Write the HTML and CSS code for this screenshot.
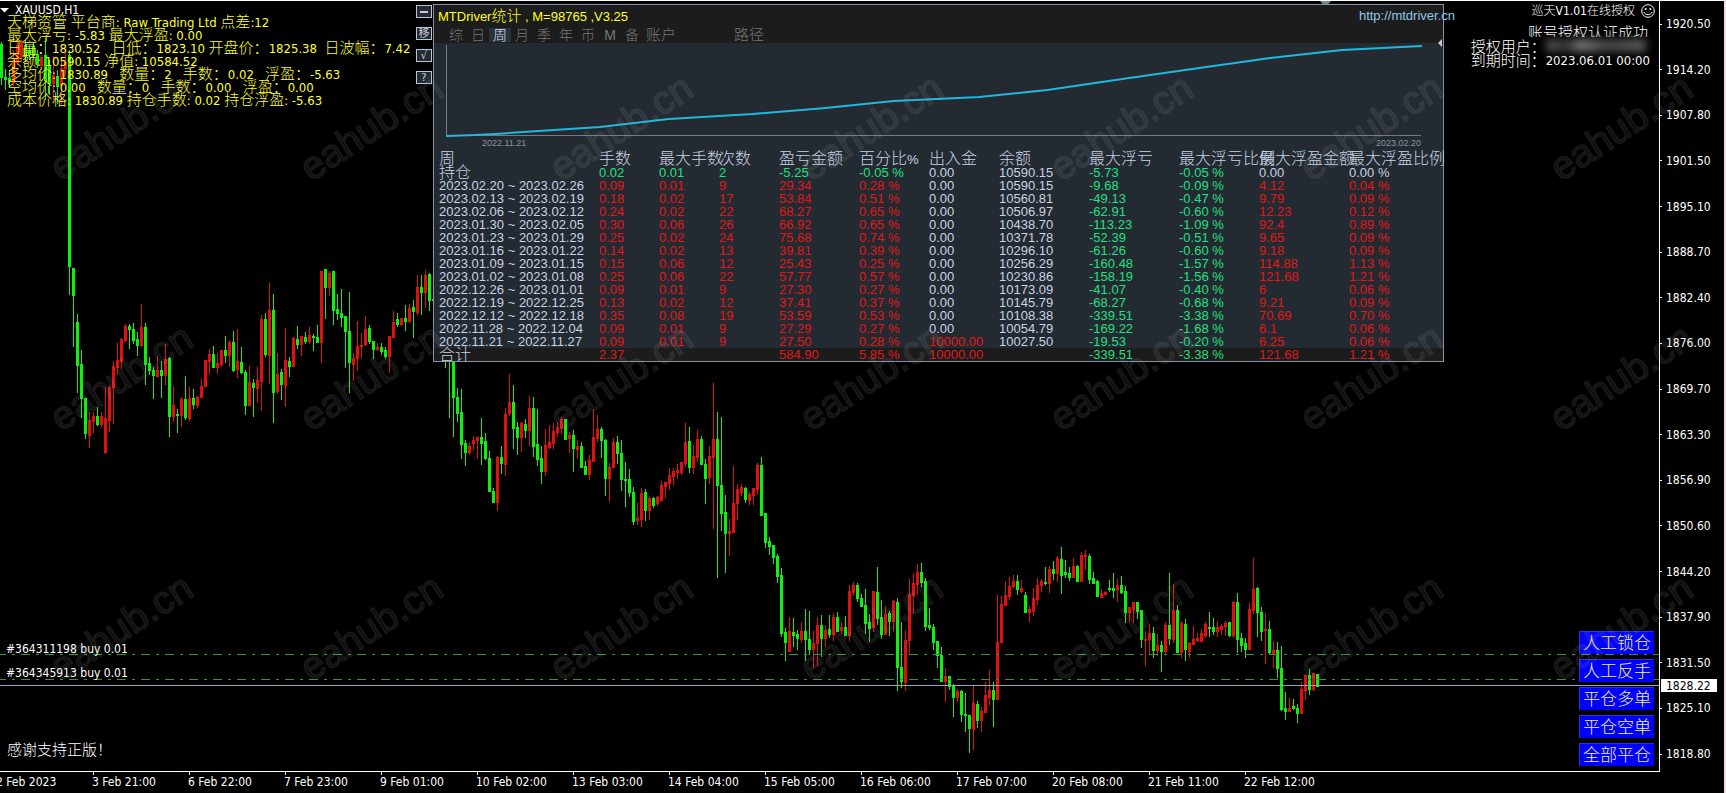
FILE: index.html
```html
<!DOCTYPE html>
<html lang="zh-CN">
<head>
    <meta charset="UTF-8">
    <meta name="viewport" content="width=device-width, initial-scale=1.0">
    <title>XAUUSD,H1</title>
    <link rel="stylesheet" href="styles.css">
</head>
<body>
    <div class="terminal">
        <main class="chart">
            <svg class="chart-canvas" id="chart-canvas" aria-hidden="true">
                <g id="candles" shape-rendering="crispEdges"></g>
                <g shape-rendering="crispEdges">
                    <line class="order-line" x1="-3" y1="654.5" x2="100%" y2="654.5"/>
                    <line class="order-line" x1="-3" y1="679.5" x2="100%" y2="679.5"/>
                    <line class="price-line" x1="0" y1="685.5" x2="100%" y2="685.5"/>
                </g>
                <path d="M0 8h9l-4.500 4.500z" fill="#fff"/>
                <path d="M1320 1h11l-5.500 6z" fill="#778899"/>
            </svg>

            <h1 class="symbol">XAUUSD,H1</h1>

            <section class="info">
                <p>天梯资管<span> </span>平台商<span>: Raw Trading Ltd </span>点差<span>:12</span></p>
                <p>最大浮亏<span>: -5.83 </span>最大浮盈<span>: 0.00</span></p>
                <p>日高：<span>1830.52   </span>日低：<span>1823.10 </span>开盘价：<span>1825.38  </span>日波幅：<span>7.42</span></p>
                <p>余额<span>: 10590.15 </span>净值<span>: 10584.52</span></p>
                <p>多均价<span>: 1830.89   </span>数量：<span>2   </span>手数：<span>0.02   </span>浮盈：<span>-5.63</span></p>
                <p>空均价<span>: 0.00   </span>数量：<span>0   </span>手数：<span>0.00   </span>浮盈：<span>0.00</span></p>
                <p>成本价格<span>: 1830.89 </span>持仓手数<span>: 0.02 </span>持仓浮盈<span>: -5.63</span></p>
            </section>

            <div class="tools">
                <button type="button" aria-label="最小化"><i></i></button>
                <button type="button">移</button>
                <button type="button">√</button>
                <button type="button">?</button>
            </div>

            <section class="panel">
                <header class="panel-head">
                    <div class="panel-title">
                        <h2>MTDriver<span>统计</span> , M=98765 ,V3.25</h2>
                        <a href="http://mtdriver.cn">http://mtdriver.cn</a>
                    </div>
                    <nav class="tabs">
                        <button type="button">综</button>
                        <button type="button">日</button>
                        <button type="button" class="active">周</button>
                        <button type="button">月</button>
                        <button type="button">季</button>
                        <button type="button">年</button>
                        <button type="button">币</button>
                        <button type="button">M</button>
                        <button type="button">备</button>
                        <button type="button" class="wide">账户</button>
                        <button type="button" class="path">路径</button>
                    </nav>
                </header>

                <div class="equity">
                    <svg viewBox="0 0 1010 94" aria-hidden="true">
                        <path d="M12.500 2v90.500H988" fill="none" stroke="#737a82" shape-rendering="crispEdges"/>
                        <polyline points="12,93 42,92 61,91 166,84 235,76 319,71 392,65 460,58 546,54 614,47 689,36 766,25 837,15 909,7 989,3" fill="none" stroke="#1fb8de" stroke-width="2"/>
                        <path d="M1009 -4v8l-4 -4z" fill="#c8ccd0"/>
                    </svg>
                    <div class="equity-dates">
                        <time>2022.11.21</time>
                        <time>2023.02.20</time>
                    </div>
                </div>

                <table class="stats">
                    <colgroup>
                        <col class="c-date"><col class="c-60"><col class="c-60"><col class="c-60">
                        <col class="c-80"><col class="c-70"><col class="c-70"><col class="c-90">
                        <col class="c-90"><col class="c-80"><col class="c-90"><col>
                    </colgroup>
                    <thead>
                        <tr>
                            <th>周</th>
                            <th>手数</th>
                            <th>最大手数</th>
                            <th>次数</th>
                            <th>盈亏金额</th>
                            <th>百分比<small>%</small></th>
                            <th>出入金</th>
                            <th>余额</th>
                            <th>最大浮亏</th>
                            <th>最大浮亏比例</th>
                            <th>最大浮盈金额</th>
                            <th>最大浮盈比例</th>
                        </tr>
                    </thead>
                    <tbody id="stats-body"></tbody>
                    <tfoot id="stats-foot"></tfoot>
                </table>
            </section>

            <section class="license">
                <p class="expert">巡天V1.01在线授权
                    <svg width="14" height="14" viewBox="0 0 14 14" aria-hidden="true">
                        <circle cx="7" cy="7" r="6.300" fill="none" stroke="#fff"/>
                        <circle cx="4.700" cy="5" r="1" fill="#fff"/>
                        <circle cx="9.300" cy="5" r="1" fill="#fff"/>
                        <path d="M3 8c1 3.600 7 3.600 8 0" fill="none" stroke="#fff"/>
                    </svg>
                </p>
                <p class="auth">账号授权认证成功</p>
                <p class="row">授权用户：<i class="masked"></i></p>
                <p class="row">到期时间：<span>2023.06.01 00:00</span></p>
            </section>

            <p class="order order-1">#364311198 buy 0.01</p>
            <p class="order order-2">#364345913 buy 0.01</p>
            <p class="thanks">感谢支持正版！</p>

            <div class="actions">
                <button type="button">人工锁仓</button>
                <button type="button">人工反手</button>
                <button type="button">平仓多单</button>
                <button type="button">平仓空单</button>
                <button type="button">全部平仓</button>
            </div>
        </main>

        <aside class="prices">
            <ul id="price-list"></ul>
            <span class="bid">1828.22</span>
        </aside>

        <footer class="times" id="times"></footer>
    </div>

    <svg class="watermark" aria-hidden="true">
        <defs>
            <pattern id="mark" width="250" height="250" patternUnits="userSpaceOnUse">
                <text x="0" y="0" transform="translate(61 182) rotate(-33)">eahub.cn</text>
            </pattern>
        </defs>
        <rect width="100%" height="100%" fill="url(#mark)"/>
    </svg>

    <script src="script.js"></script>
</body>
</html>
```

FILE: styles.css
```css
* {
    box-sizing: border-box;
}
body {
    margin: 0;
    background-color: #000;
    color: #fff;
    font-family: "DejaVu Sans Condensed", "Noto Sans", "Noto Sans CJK SC", sans-serif;
    font-size: 12px;
    line-height: 14px;
    overflow: hidden;
}
h1, h2, p, ul {
    margin: 0;
    padding: 0;
    font-size: inherit;
    font-weight: normal;
}
button {
    margin: 0;
    padding: 0;
    border: 0;
    background: none;
    color: inherit;
    font: inherit;
    cursor: pointer;
}

.terminal {
    display: grid;
    grid-template-columns: 1fr 64px;
    grid-template-rows: 1fr 21px;
    min-height: 100vh;
    border-top: 1px solid #fff;
    border-right: 2px solid #f3dcdc;
}
.chart {
    position: relative;
    min-width: 0;
    border-top: 1px solid #fff;
    border-right: 1px solid #fff;
    border-bottom: 1px solid #fff;
    overflow: hidden;
    margin-top: -1px;
}
.chart-canvas {
    position: absolute;
    top: -1px;
    left: 0;
    width: 100%;
    height: 100%;
}
.up {
    fill: #e01010;
}
.down {
    fill: #10f010;
}
.order-line {
    stroke: #2c9a35;
    stroke-dasharray: 9 6 3 6;
}
.price-line {
    stroke: #9aa6bc;
}
.symbol {
    position: absolute;
    top: 2px;
    left: 15px;
}

/* account summary */
.info {
    position: absolute;
    top: 13px;
    left: 7px;
    color: #ffff20;
    font-family: "Noto Sans CJK SC", sans-serif;
    font-size: 15px;
    font-weight: 300;
}
.info p {
    height: 13px;
    font-weight: 300;
    line-height: 13px;
    white-space: pre;
}
.info span {
    font-family: "DejaVu Sans Condensed", "Noto Sans", sans-serif;
    font-size: 13px;
    font-weight: 400;
}

.tools {
    position: absolute;
    top: 4px;
    left: 416px;
    display: flex;
    flex-direction: column;
    gap: 9px;
}
.tools button {
    display: flex;
    align-items: center;
    justify-content: center;
    width: 16px;
    height: 13px;
    border: 1px solid #b4c6dc;
    background-color: #262b33;
    color: #d0d4d8;
    font-size: 11px;
    line-height: 11px;
    overflow: hidden;
}
.tools i {
    width: 8px;
    height: 2px;
    background-color: #c8ccd0;
}

/* statistics window */
.panel {
    position: absolute;
    top: 3px;
    left: 433px;
    width: 1011px;
    border: 1px solid #8492a6;
    background-color: #242a32;
    color: #c8d4e4;
    font-family: "Liberation Sans", "Noto Sans CJK SC", sans-serif;
    font-size: 13px;
}
.panel-head {
    height: 38px;
    background-color: #1c1c1c;
}
.panel-title {
    display: flex;
    justify-content: space-between;
    padding-top: 3px;
    line-height: 16px;
    margin-right: -12px;
}
.panel-title h2 {
    padding-left: 4px;
    color: #ffff20;
    white-space: pre;
}
.panel-title span {
    font-size: 15px;
    font-weight: 300;
}
.panel-title a {
    color: #8fc8e8;
    text-decoration: none;
}
.tabs {
    display: flex;
    padding: 3px 0 0 11px;
    color: #777;
    font-size: 14px;
    font-weight: 300;
    line-height: 14px;
}
.tabs button {
    width: 22px;
    height: 14px;
}
.tabs .active {
    background-color: #2a323e;
    color: #d4e4f8;
}
.tabs .wide,
.tabs .path {
    width: 36px;
    font-size: 15px;
}
.tabs .path {
    margin-left: 52px;
}
.equity svg {
    display: block;
    width: 100%;
    overflow: visible;
}
.equity-dates {
    display: flex;
    justify-content: space-between;
    height: 15px;
    padding: 0 22px 0 48px;
    color: #8a94a0;
    font-size: 9px;
    line-height: 12px;
}
.stats {
    width: 100%;
    table-layout: fixed;
    border-collapse: collapse;
}
.c-date { width: 165px; }
.c-60 { width: 60px; }
.c-70 { width: 70px; }
.c-80 { width: 80px; }
.c-90 { width: 90px; }
.stats th, .stats td {
    height: 13px;
    padding: 0;
    font-weight: normal;
    line-height: 13px;
    text-align: left;
    white-space: nowrap;
}
.stats th:first-child, .stats td:first-child {
    padding-left: 5px;
}
.stats th {
    height: 14px;
    font-size: 16px;
    font-weight: 300;
}
.stats th small {
    font-size: 13px;
}
.stats .zh {
    font-size: 16px;
    font-weight: 300;
}
.stats .gain {
    color: #e01818;
}
.stats .loss {
    color: #20e080;
}
.stats tfoot {
    background-color: #1c1c1c;
}

/* licence notice */
.license {
    position: absolute;
    top: 3px;
    right: 4px;
    display: flex;
    flex-direction: column;
    font-family: "DejaVu Sans Condensed", "Noto Sans CJK SC", sans-serif;
}
.license p {
    font-weight: 300;
}
.expert {
    display: flex;
    gap: 6px;
    align-self: flex-end;
}
.auth {
    align-self: flex-end;
    height: 13px;
    margin: 6px 7px 0 0;
    font-size: 15px;
    line-height: 18px;
    overflow: hidden;
}
.row {
    display: flex;
    height: 14px;
    font-size: 15px;
    line-height: 20px;
}
.row span {
    font-size: 13px;
    font-weight: 400;
    margin-right: 5px;
}
.masked {
    width: 100px;
    height: 13px;
    margin-top: 2px;
    background: linear-gradient(to right, #555, #333 20%, #777 35%, #444 60%, #5a5a5a);
    filter: blur(4px);
}

.order {
    position: absolute;
    left: 6px;
}
.order-1 { top: 641px; }
.order-2 { top: 665px; }
.thanks {
    position: absolute;
    left: 7px;
    bottom: 12px;
    font-size: 15px;
    font-weight: 300;
    line-height: 18px;
}
.actions {
    position: absolute;
    right: 5px;
    bottom: 5px;
    display: flex;
    flex-direction: column;
    gap: 5px;
}
.actions button {
    width: 75px;
    height: 23px;
    border-top: 1px solid #3030d8;
    border-left: 1px solid #3030d8;
    background-color: #00f;
    color: #f4f4a0;
    font-size: 17px;
    font-weight: 300;
    line-height: 20px;
}

/* scales */
.prices {
    position: relative;
}
.prices ul {
    display: flex;
    flex-direction: column;
    justify-content: space-between;
    height: 100%;
    padding: 15px 0 10px;
    list-style: none;
}
.prices li {
    display: flex;
    align-items: center;
    gap: 4px;
    height: 16px;
}
.prices li::before {
    content: "";
    width: 2px;
    height: 1px;
    background-color: #fff;
}
.bid {
    position: absolute;
    top: 678px;
    left: 1px;
    width: 56px;
    height: 13px;
    padding-left: 5px;
    background-color: #fff;
    color: #000;
    line-height: 14px;
}
.times {
    grid-column: 1 / -1;
    display: flex;
    margin-left: -4px;
    overflow: hidden;
}
.times span {
    flex: 0 0 96px;
    line-height: 15px;
    white-space: nowrap;
}
.times span::before {
    content: "";
    display: block;
    width: 1px;
    height: 3px;
    margin-left: 1px;
    background-color: #fff;
}

.watermark {
    position: absolute;
    top: 0;
    left: 0;
    width: 100%;
    height: 100%;
    pointer-events: none;
}
.watermark text {
    font-family: "Liberation Sans", sans-serif;
    font-size: 39px;
    fill: rgba(150, 150, 150, 0.08);
    stroke: rgba(150, 150, 150, 0.11);
    stroke-width: 2px;
}
```

FILE: script.js
```js
// Candles every 4px: direction, high, body top, body bottom, low
const runs = [
    {
        x: 1,
        bars: `g42,44,77,85 g69,77,79,90 g70,78,80,88 r50,60,82,86 r40,45,62,65 r40,41,56,62 g40,45,56,62 g45,50,54,60
        g43,46,55,60 g50,54,64,68 r55,57,65,70 g38,55,80,100 g60,66,83,95 r56,75,83,100 g70,76,86,104 r62,68,85,104
        r50,62,68,75 g50,55,266,295 g268,268,295,347 g314,322,365,393 g350,364,398,418 g398,398,433,439 r412,420,435,448
        r412,416,421,433 g407,416,424,426 r412,416,424,427 r387,418,452,454 r385,387,420,432 r361,366,387,424 r343,360,367,375
        r338,339,361,369 r324,326,340,342 g324,326,329,349 g323,329,340,344 g332,339,345,356 r304,327,345,347 g323,327,364,385
        g357,363,370,375 g367,370,375,399 r356,370,376,376 g361,370,375,398 r344,359,375,385 g357,358,416,437 r386,405,416,422
        g409,414,415,433 r397,399,415,427 g376,399,417,420 r387,398,418,421 g389,398,404,409 r396,397,405,408 r379,386,397,398
        r360,360,386,387 r349,354,361,374 g346,354,367,368 r353,363,367,374 r350,350,364,367 g336,350,355,363 r340,342,355,367
        g331,342,370,372 r329,361,369,378 g347,362,372,374 g370,372,405,415 r366,382,405,405 g379,383,387,417 r367,380,388,403
        r315,319,381,411 g313,319,354,357 r283,310,355,384 g294,310,392,423 r353,374,391,394 g369,372,384,400 r328,360,385,407
        g357,361,366,377 r337,338,366,367 g326,339,344,349 r336,336,344,356 g332,337,341,344 r327,335,341,344 g334,336,337,351
        g325,337,342,343 r271,271,342,363 g269,269,287,319 r271,273,287,296 g271,271,310,325 g294,309,313,320 g289,313,317,327
        g316,316,331,368 g292,331,362,393 r353,358,364,381 r321,346,358,371 r333,345,346,358 r316,329,344,346 g325,328,341,344
        g341,341,349,359 r343,347,349,351 g343,347,351,355 g347,350,356,359 r336,336,356,373 r311,322,337,338 g313,319,324,327
        r318,318,324,326 g305,318,321,331 r304,308,321,323 g300,307,311,338 r275,287,312,315 g275,287,292,315 r270,275,292,308
        g273,274,300,311 g298,299,300,301`
    },
    {
        x: 445,
        bars: `g340,350,358,368 g330,340,350,418 g350,350,397,437 g388,397,413,422 g389,412,444,459 g440,443,452,466 r442,446,452,455
        r436,440,443,450 r437,437,440,459 g418,437,443,465 g433,441,458,460 g451,458,491,492 g488,491,502,503 r456,457,502,511
        g446,457,463,474 r408,414,464,476 r374,402,413,416 g385,402,428,449 g422,427,437,455 r422,423,437,452 g419,424,430,438
        r396,408,430,446 g397,408,446,457 g409,444,459,466 g446,458,471,484 r429,445,471,476 r425,442,447,449 r423,431,443,449
        r422,427,432,437 r417,419,428,434 g419,419,439,440 r432,435,438,453 g430,435,448,472 r440,446,449,459 g442,446,467,467
        g461,466,474,475 r455,460,474,480 r409,437,461,462 r415,429,438,442 g427,429,440,458 g439,440,478,496 r463,467,478,502
        r438,442,467,468 g436,442,453,464 g440,453,479,491 g462,479,480,507 g469,479,492,497 g487,492,521,525 r503,518,520,525
        r488,493,519,527 g489,492,510,521 r496,498,510,520 g497,498,505,508 r496,497,503,506 r481,485,500,501 r482,482,486,498
        r468,475,483,490 r468,471,476,485 r464,470,472,479 r462,462,472,475 r423,442,463,467 g427,441,467,473 r445,456,467,474
        r430,439,457,462 g436,439,464,465 g459,464,478,504 r446,456,477,484 r383,439,457,529 g412,439,485,578 g417,485,513,531
        g495,512,533,573 r519,531,533,556 r466,503,532,533 r484,489,503,520 r484,487,492,496 g487,488,499,503 r492,494,500,505
        r488,488,495,505 r463,465,489,495 g457,465,515,515 g513,513,542,548 g537,541,546,555 g545,545,557,564 g554,556,576,583
        g568,575,633,637 g628,632,642,661 r617,631,651,652 g618,632,635,647 g630,634,638,650 r622,631,639,643 g609,631,639,661
        g611,639,649,655 r631,643,649,668 r617,625,643,666 g615,625,638,657 r625,630,638,647 g615,629,634,638 r613,617,634,641
        g612,617,631,632 r622,627,630,635 g616,627,635,636 r585,591,635,641 r582,585,592,596 g583,585,598,602 g594,598,606,606
        g589,605,623,634 g614,622,628,642 r591,591,627,632 g567,592,618,625 g600,617,634,639 r606,614,634,634 g611,613,621,636
        r600,601,621,632 g598,602,667,691 g622,667,681,688 r630,640,682,691 r579,594,640,655 r573,583,595,614 r564,572,584,594
        g563,572,582,587 g578,581,626,631 g608,625,627,630 g624,627,642,650 g641,641,655,668 g647,655,681,682 r668,676,681,702
        g676,676,686,690 g684,685,697,717 r689,691,697,702 g690,691,714,722 g693,714,715,732 g715,715,728,753 r686,703,729,750
        g701,704,720,728 r707,711,720,732 r682,695,712,713 r670,690,697,705 g682,690,699,727 r595,642,699,699 r596,604,642,643
        r581,595,605,606 r577,586,596,600 r575,581,586,588 g575,581,589,595 r580,588,591,593 g592,595,612,613 r606,609,612,622
        r588,598,611,616 r578,585,599,605 r579,581,585,592 g567,582,583,585 r566,569,583,593 g561,569,573,580 r556,558,573,582
        g547,559,575,594 g560,572,574,578 g567,573,577,581 r558,566,577,578 g565,566,581,582 r552,555,581,582 r550,555,556,570
        g554,556,579,584 g572,578,583,583 g580,581,596,597 r589,593,597,598 r591,592,594,595 g580,588,589,592 g573,588,590,598
        r579,585,589,602 g576,585,592,594 g586,591,612,623 r607,607,612,622 r602,602,609,623 g602,602,611,619 g610,610,639,648
        r631,639,640,666 r624,633,639,655 g627,633,650,658 r634,645,650,656 g641,645,651,672 r622,625,651,655 g573,625,638,645
        r584,610,639,643 g605,610,652,653 r621,623,652,658 g619,624,649,661 r642,643,651,658 r626,639,644,644 r633,638,640,642
        r629,633,641,641 r622,624,635,638 g612,627,628,637 g618,627,631,635 r621,627,631,637 r624,626,629,635 r621,623,626,636
        g622,622,635,637 r601,602,635,638 g593,602,639,653 g633,638,645,652 g638,643,649,658 r603,609,649,650 r558,589,610,614
        g587,588,612,637 g607,612,631,641 r613,629,630,664 g621,629,652,655 r641,650,653,668 g642,650,668,678 g646,668,709,711
        g692,708,711,720 r698,708,711,712 g699,706,708,710 g704,708,713,723 r682,689,713,713 r674,675,690,700 g669,675,689,695
        r673,673,689,691 g674,674,686,687`
    }
];

const candles = document.getElementById('candles');
candles.innerHTML = runs.map(run => run.bars.trim().split(/\s+/).map((bar, i) => {
    const x = run.x + i * 4;
    const [high, top, bottom, low] = bar.slice(1).split(',').map(Number);
    const cls = bar[0] === 'r' ? 'up' : 'down';
    return `<path class="${cls}" d="M${x} ${high}h1V${low}h-1zM${x - 1} ${top}h3V${bottom + 1}h-3z"/>`;
}).join('')).join('');

const rows = [
    ['持仓', '0.02', '0.01', '2', '-5.25', '-0.05 %', '0.00', '10590.15', '-5.73', '-0.05 %', '0.00', '0.00 %'],
    ['2023.02.20 ~ 2023.02.26', '0.09', '0.01', '9', '29.34', '0.28 %', '0.00', '10590.15', '-9.68', '-0.09 %', '4.12', '0.04 %'],
    ['2023.02.13 ~ 2023.02.19', '0.18', '0.02', '17', '53.84', '0.51 %', '0.00', '10560.81', '-49.13', '-0.47 %', '9.79', '0.09 %'],
    ['2023.02.06 ~ 2023.02.12', '0.24', '0.02', '22', '68.27', '0.65 %', '0.00', '10506.97', '-62.91', '-0.60 %', '12.23', '0.12 %'],
    ['2023.01.30 ~ 2023.02.05', '0.30', '0.06', '26', '66.92', '0.65 %', '0.00', '10438.70', '-113.23', '-1.09 %', '92.4', '0.89 %'],
    ['2023.01.23 ~ 2023.01.29', '0.25', '0.02', '24', '75.68', '0.74 %', '0.00', '10371.78', '-52.39', '-0.51 %', '9.65', '0.09 %'],
    ['2023.01.16 ~ 2023.01.22', '0.14', '0.02', '13', '39.81', '0.39 %', '0.00', '10296.10', '-61.26', '-0.60 %', '9.18', '0.09 %'],
    ['2023.01.09 ~ 2023.01.15', '0.15', '0.06', '12', '25.43', '0.25 %', '0.00', '10256.29', '-160.48', '-1.57 %', '114.88', '1.13 %'],
    ['2023.01.02 ~ 2023.01.08', '0.25', '0.06', '22', '57.77', '0.57 %', '0.00', '10230.86', '-158.19', '-1.56 %', '121.68', '1.21 %'],
    ['2022.12.26 ~ 2023.01.01', '0.09', '0.01', '9', '27.30', '0.27 %', '0.00', '10173.09', '-41.07', '-0.40 %', '6', '0.06 %'],
    ['2022.12.19 ~ 2022.12.25', '0.13', '0.02', '12', '37.41', '0.37 %', '0.00', '10145.79', '-68.27', '-0.68 %', '9.21', '0.09 %'],
    ['2022.12.12 ~ 2022.12.18', '0.35', '0.08', '19', '53.59', '0.53 %', '0.00', '10108.38', '-339.51', '-3.38 %', '70.69', '0.70 %'],
    ['2022.11.28 ~ 2022.12.04', '0.09', '0.01', '9', '27.29', '0.27 %', '0.00', '10054.79', '-169.22', '-1.68 %', '6.1', '0.06 %'],
    ['2022.11.21 ~ 2022.11.27', '0.09', '0.01', '9', '27.50', '0.28 %', '10000.00', '10027.50', '-19.53', '-0.20 %', '6.25', '0.06 %']
];
const total = ['合计', '2.37', '', '', '584.90', '5.85 %', '10000.00', '', '-339.51', '-3.38 %', '121.68', '1.21 %'];

function cellClass(value, col, row) {
    if (col === 0) {
        return value.length < 3 ? 'zh' : '';
    }
    if (col === 7 || parseFloat(value) === 0) {
        return '';
    }
    if (value.startsWith('-') || (row[0] === '持仓' && col < 4)) {
        return 'loss';
    }
    return 'gain';
}

function renderRow(row) {
    return '<tr>' + row.map((value, col) => `<td class="${cellClass(value, col, row)}">${value}</td>`).join('') + '</tr>';
}

document.getElementById('stats-body').innerHTML = rows.map(renderRow).join('');
document.getElementById('stats-foot').innerHTML = renderRow(total);

const prices = ['1920.50', '1914.20', '1907.80', '1901.50', '1895.10', '1888.70', '1882.40', '1876.00', '1869.70',
    '1863.30', '1856.90', '1850.60', '1844.20', '1837.90', '1831.50', '1825.10', '1818.80'];
document.getElementById('price-list').innerHTML = prices.map(p => `<li>${p}</li>`).join('');

const times = ['2 Feb 2023', '3 Feb 21:00', '6 Feb 22:00', '7 Feb 23:00', '9 Feb 01:00', '10 Feb 02:00', '13 Feb 03:00',
    '14 Feb 04:00', '15 Feb 05:00', '16 Feb 06:00', '17 Feb 07:00', '20 Feb 08:00', '21 Feb 11:00', '22 Feb 12:00'];
document.getElementById('times').innerHTML = times.map(t => `<span>${t}</span>`).join('');
```
